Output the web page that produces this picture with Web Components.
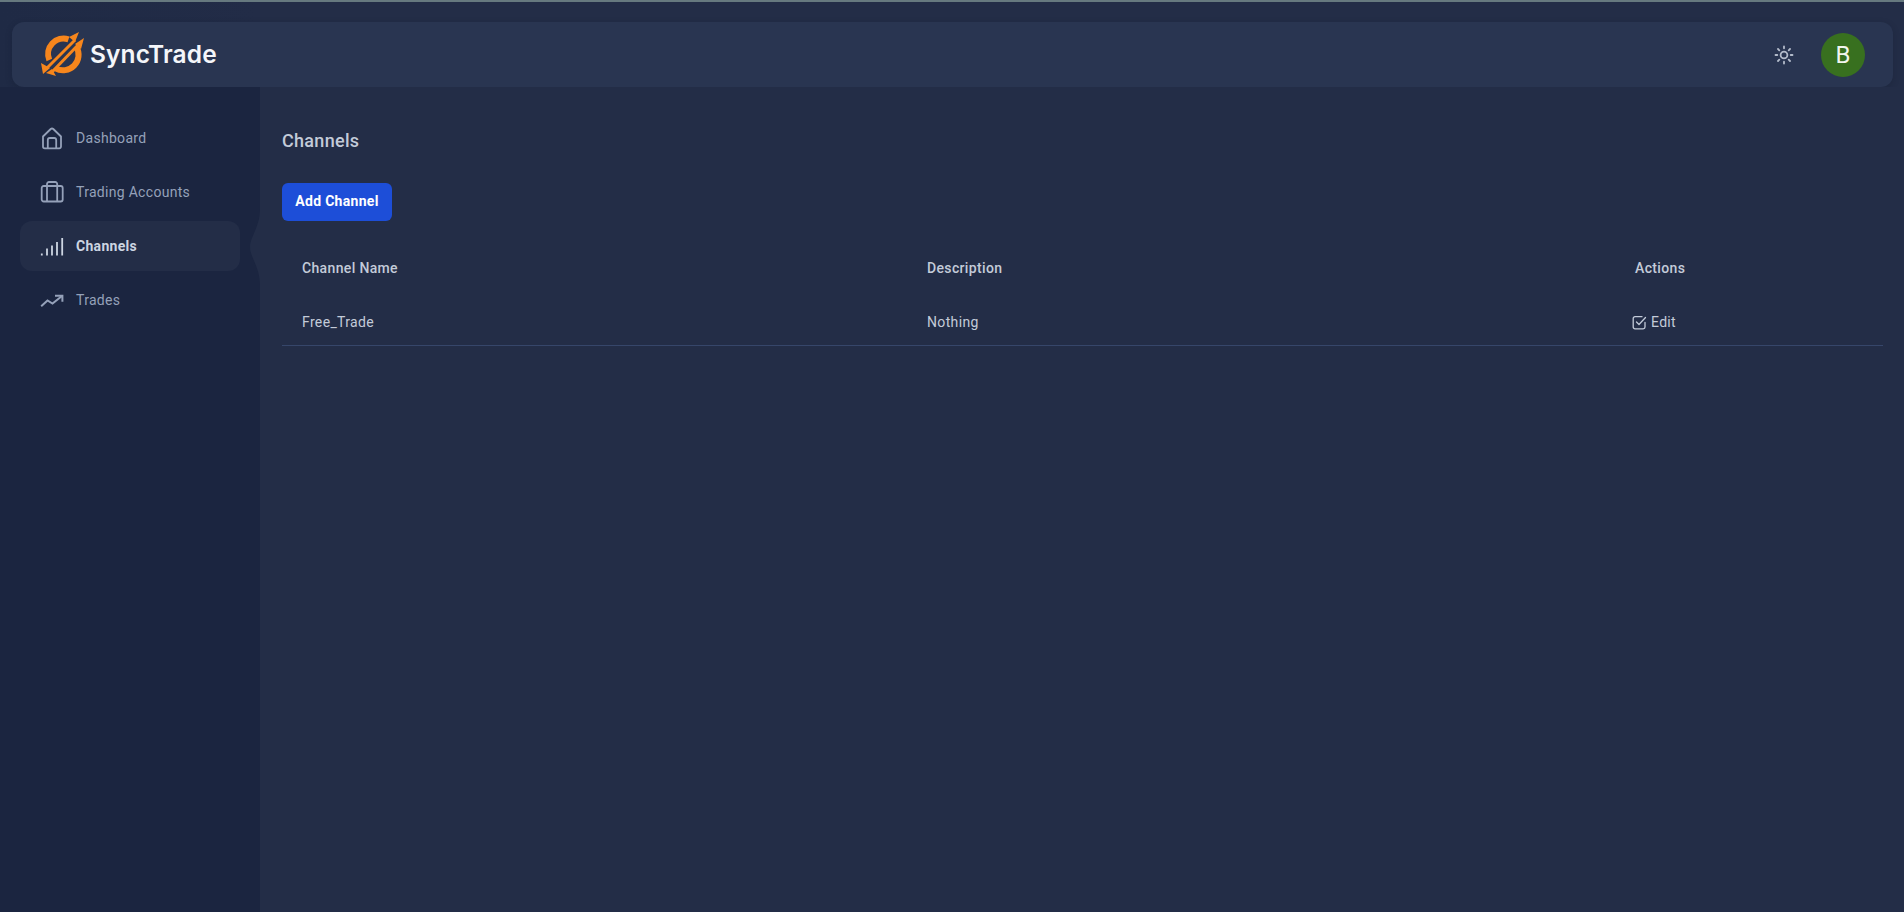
<!DOCTYPE html>
<html lang="en">
<head>
<meta charset="utf-8">
<title>SyncTrade</title>
<style>
  html, body { margin: 0; height: 100%; background: #232d47; }
  body { font-family: Roboto, "Liberation Sans", sans-serif; overflow: hidden; }
</style>
</head>
<body>
<sync-app></sync-app>
<script>
// Top bar with logo, theme toggle and avatar
class SyncHeader extends HTMLElement {
  constructor() {
    super();
    this.attachShadow({ mode: 'open' });
    this.shadowRoot.innerHTML = `
      <style>
        :host {
          display: block;
          padding: 20px 11px 0 12px;
          background: linear-gradient(90deg, #1f2a45 0, #222c47 260px, #232d47 260px);
        }
        .bar {
          display: flex;
          align-items: center;
          height: 65px;
          padding: 0 28px 0 29px;
          background: #293551;
          border-radius: 12px;
          box-shadow: 0 2px 6px rgba(15, 22, 40, 0.25);
        }
        .logo { display: flex; align-items: center; gap: 5px; flex: 1; margin-top: -2px; }
        .name {
          font: 600 24.500px Inter, Lato, sans-serif;
          letter-spacing: 0.1px;
          color: #f4f6fa;
        }
        .sun { display: block; margin-right: 27px; }
        .avatar {
          width: 44px;
          height: 44px;
          border-radius: 50%;
          background: #38701f;
          color: #f2f5ee;
          display: flex;
          align-items: center;
          justify-content: center;
          font-size: 24px;
        }
      </style>
      <div class="bar">
        <div class="logo">
          <svg width="44" height="46" viewBox="0 0 44 46" fill="none">
            <path d="M27.500 8.300A15.500 15.500 0 0 0 8.300 29" stroke="#f7861c" stroke-width="6"/>
            <path d="M14.500 37.300A15.500 15.500 0 0 0 35.500 16" stroke="#f7861c" stroke-width="6"/>
            <path d="M5 38 34 9" stroke="#f7861c" stroke-width="3"/>
            <path d="M10 42 38 13" stroke="#f7861c" stroke-width="3"/>
            <path d="M28 6 38 1 34 11Z M34 13 43 7 40 18Z" fill="#f7861c"/>
            <path d="M0 32 2 43 9 37Z M5 42 15 45 11 38Z" fill="#f7861c"/>
          </svg>
          <span class="name">SyncTrade</span>
        </div>
        <svg class="sun" width="20" height="20" viewBox="0 0 20 20" fill="none" stroke="#b4bccb" stroke-width="1.800" stroke-linecap="round">
          <circle cx="10" cy="10" r="3.400"/>
          <path d="M10 1.500v1.800M10 16.700v1.800M1.500 10h1.800M16.700 10h1.800M4 4l1.300 1.300M14.700 14.700 16 16M4 16l1.300-1.300M14.700 5.300 16 4"/>
        </svg>
        <div class="avatar">B</div>
      </div>
    `;
  }
}

// One link of the side menu
class NavItem extends HTMLElement {
  constructor() {
    super();
    this.attachShadow({ mode: 'open' });
    this.shadowRoot.innerHTML = `
      <style>
        :host {
          display: flex;
          align-items: center;
          gap: 12px;
          height: 50px;
          padding-left: 20px;
          border-radius: 12px;
          font-size: 14px;
          letter-spacing: 0.3px;
          color: #95a1b9;
        }
        :host([active]) {
          background: #232d47;
          color: #cdd5e2;
          font-weight: 700;
        }
        ::slotted(svg) { display: block; flex: none; }
      </style>
      <slot name="icon"></slot>
      <slot></slot>
    `;
  }
}

class SyncSidebar extends HTMLElement {
  constructor() {
    super();
    this.attachShadow({ mode: 'open' });
    this.shadowRoot.innerHTML = `
      <style>
        :host {
          display: block;
          position: relative;
          width: 260px;
          flex: none;
          box-sizing: border-box;
          padding: 26px 20px 0;
          background: #1b2540;
        }
        .menu { display: flex; flex-direction: column; gap: 4px; }
        .notch { position: absolute; left: 250px; top: 122px; display: block; }
      </style>
      <div class="menu"><slot></slot></div>
      <svg class="notch" width="10" height="76" viewBox="0 0 10 76"><path d="M10 0V76C10 58 0 48 0 38S10 18 10 0Z" fill="#232d47"/></svg>
    `;
  }
}

// Table of the user's channels
class ChannelTable extends HTMLElement {
  constructor() {
    super();
    this.attachShadow({ mode: 'open' });
    this.shadowRoot.innerHTML = `
      <style>
        :host { display: block; margin-top: 20px; font-size: 14px; letter-spacing: 0.35px; color: #c3cbd9; }
        .row {
          display: grid;
          grid-template-columns: 625px 708px 1fr;
          align-items: center;
          box-sizing: border-box;
          padding-left: 20px;
        }
        .head { font-weight: 500; height: 54px; }
        .body { border-bottom: 1px solid #36466a; height: 51px; padding-top: 4px; }
        .edit { display: flex; align-items: center; gap: 4px; margin-left: -3px; letter-spacing: 0.3px; }
        .edit svg { display: block; }
      </style>
      <div class="row head">
        <div>Channel Name</div>
        <div>Description</div>
        <div>Actions</div>
      </div>
      <div class="row body">
        <div>Free_Trade</div>
        <div>Nothing</div>
        <div><span class="edit">
          <svg width="15" height="15" viewBox="0 0 15 15" fill="none" stroke="#c3cbd9" stroke-width="1.300" stroke-linecap="round" stroke-linejoin="round">
            <path d="M13 7.500V12a1.800 1.800 0 0 1-1.800 1.800H3A1.800 1.800 0 0 1 1.200 12V3.500A1.800 1.800 0 0 1 3 1.700h7"/>
            <path d="M4.500 7 7 9.500 13.500 2.500"/>
          </svg>Edit</span></div>
      </div>
    `;
  }
}

class ChannelsPage extends HTMLElement {
  constructor() {
    super();
    this.attachShadow({ mode: 'open' });
    this.shadowRoot.innerHTML = `
      <style>
        :host {
          display: block;
          flex: 1;
          box-sizing: border-box;
          padding: 43px 21px 0 22px;
          background: #232d47;
        }
        h1 { margin: 0; font-size: 18px; line-height: 22px; font-weight: 500; color: #c3cbd9; letter-spacing: 0.3px; }
        button {
          display: block;
          margin-top: 31px;
          width: 110px;
          height: 38px;
          padding: 0 0 2px;
          border: 0;
          border-radius: 6px;
          background: #1d4ed8;
          color: #fff;
          font: 700 14px Roboto, sans-serif;
          letter-spacing: 0.3px;
        }
      </style>
      <h1>Channels</h1>
      <button>Add Channel</button>
      <channel-table></channel-table>
    `;
  }
}

class SyncApp extends HTMLElement {
  constructor() {
    super();
    this.attachShadow({ mode: 'open' });
    this.shadowRoot.innerHTML = `
      <style>
        :host { display: flex; flex-direction: column; height: 912px; }
        .strip { height: 2px; flex: none; background: #66797f; }
        .shell { display: flex; flex: 1; }
      </style>
      <div class="strip"></div>
      <sync-header></sync-header>
      <div class="shell">
        <sync-sidebar>
          <nav-item>
            <svg slot="icon" width="24" height="24" viewBox="0 0 24 24" fill="none" stroke="#95a1b9" stroke-width="1.800" stroke-linejoin="round"><path d="M3 10.500 10.700 3a2 2 0 0 1 2.600 0L21 10.500v10a1.800 1.800 0 0 1-1.800 1.800H4.800A1.800 1.800 0 0 1 3 20.500Z"/><path d="M7.800 22.300V14a2 2 0 0 1 2-2h4.400a2 2 0 0 1 2 2v8.300"/></svg>
            Dashboard
          </nav-item>
          <nav-item>
            <svg slot="icon" width="24" height="24" viewBox="0 0 24 24" fill="none" stroke="#95a1b9" stroke-width="1.800" stroke-linejoin="round"><rect x="1.700" y="6" width="21" height="15.500" rx="2"/><path d="M7 6V4a2 2 0 0 1 2-2h6.200a2 2 0 0 1 2 2v2M7 6v15.500M17.200 6v15.500"/></svg>
            Trading Accounts
          </nav-item>
          <nav-item active>
            <svg slot="icon" width="24" height="24" viewBox="0 0 24 24" fill="none" stroke="#cdd5e2" stroke-width="1.800"><path d="M1.800 19.500v2M7 14.500v7M12 11.500v10M17 8v13.500M22.200 4v17.500"/></svg>
            Channels
          </nav-item>
          <nav-item>
            <svg slot="icon" width="24" height="24" viewBox="0 0 24 24" fill="none" stroke="#95a1b9" stroke-width="2" stroke-linejoin="miter"><path d="M1.200 18.300 7.500 12.500l5 3L22 8"/><path d="M15 7.800h7.400v6"/></svg>
            Trades
          </nav-item>
        </sync-sidebar>
        <channels-page></channels-page>
      </div>
    `;
  }
}

customElements.define('sync-header', SyncHeader);
customElements.define('nav-item', NavItem);
customElements.define('sync-sidebar', SyncSidebar);
customElements.define('channel-table', ChannelTable);
customElements.define('channels-page', ChannelsPage);
customElements.define('sync-app', SyncApp);
</script>
</body>
</html>
